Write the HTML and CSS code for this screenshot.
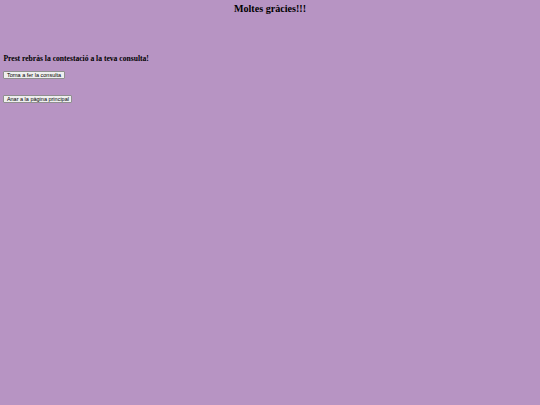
FILE: index.html
```html
<!DOCTYPE html>
<html lang="ca">
<head>
<meta charset="utf-8">
<title>Moltes gràcies</title>
<link rel="stylesheet" href="styles.css">
</head>
<body>
<main class="page">
  <h2 class="title">Moltes gràcies!!!</h2>
  <p class="msg">Prest rebràs la contestació a la teva consulta!</p>
  <div class="actions">
    <button class="btn" type="button">Torna a fer la consulta</button>
    <button class="btn" type="button">Anar a la pàgina principal</button>
  </div>
</main>
</body>
</html>
```
FILE: styles.css
```css
html, body {
  margin: 0;
  padding: 0;
  background: #b794c3;
}
body {
  font-family: "Liberation Serif", "Times New Roman", serif;
  color: #000;
}
.page {
  padding: 2.5px 3.4px 0;
}
.title {
  margin: 0;
  text-align: center;
  font-size: 10.1px;
  line-height: 11.6px;
  font-weight: bold;
}
.msg {
  margin: 40.6px 0 0;
  font-size: 7.6px;
  line-height: 8.7px;
  font-weight: bold;
}
.actions {
  display: flex;
  flex-direction: column;
  align-items: flex-start;
  gap: 15.4px;
  margin-top: 7.8px;
}
.btn {
  font-family: "Liberation Sans", Arial, sans-serif;
  font-size: 5.5px;
  line-height: 6.3px;
  height: 8.3px;
  padding: 0 2.5px;
  margin: 0;
  background: #efefef;
  color: #000;
  border: 1px solid #8f8f8f;
  border-radius: 1px;
  box-sizing: border-box;
}
```
